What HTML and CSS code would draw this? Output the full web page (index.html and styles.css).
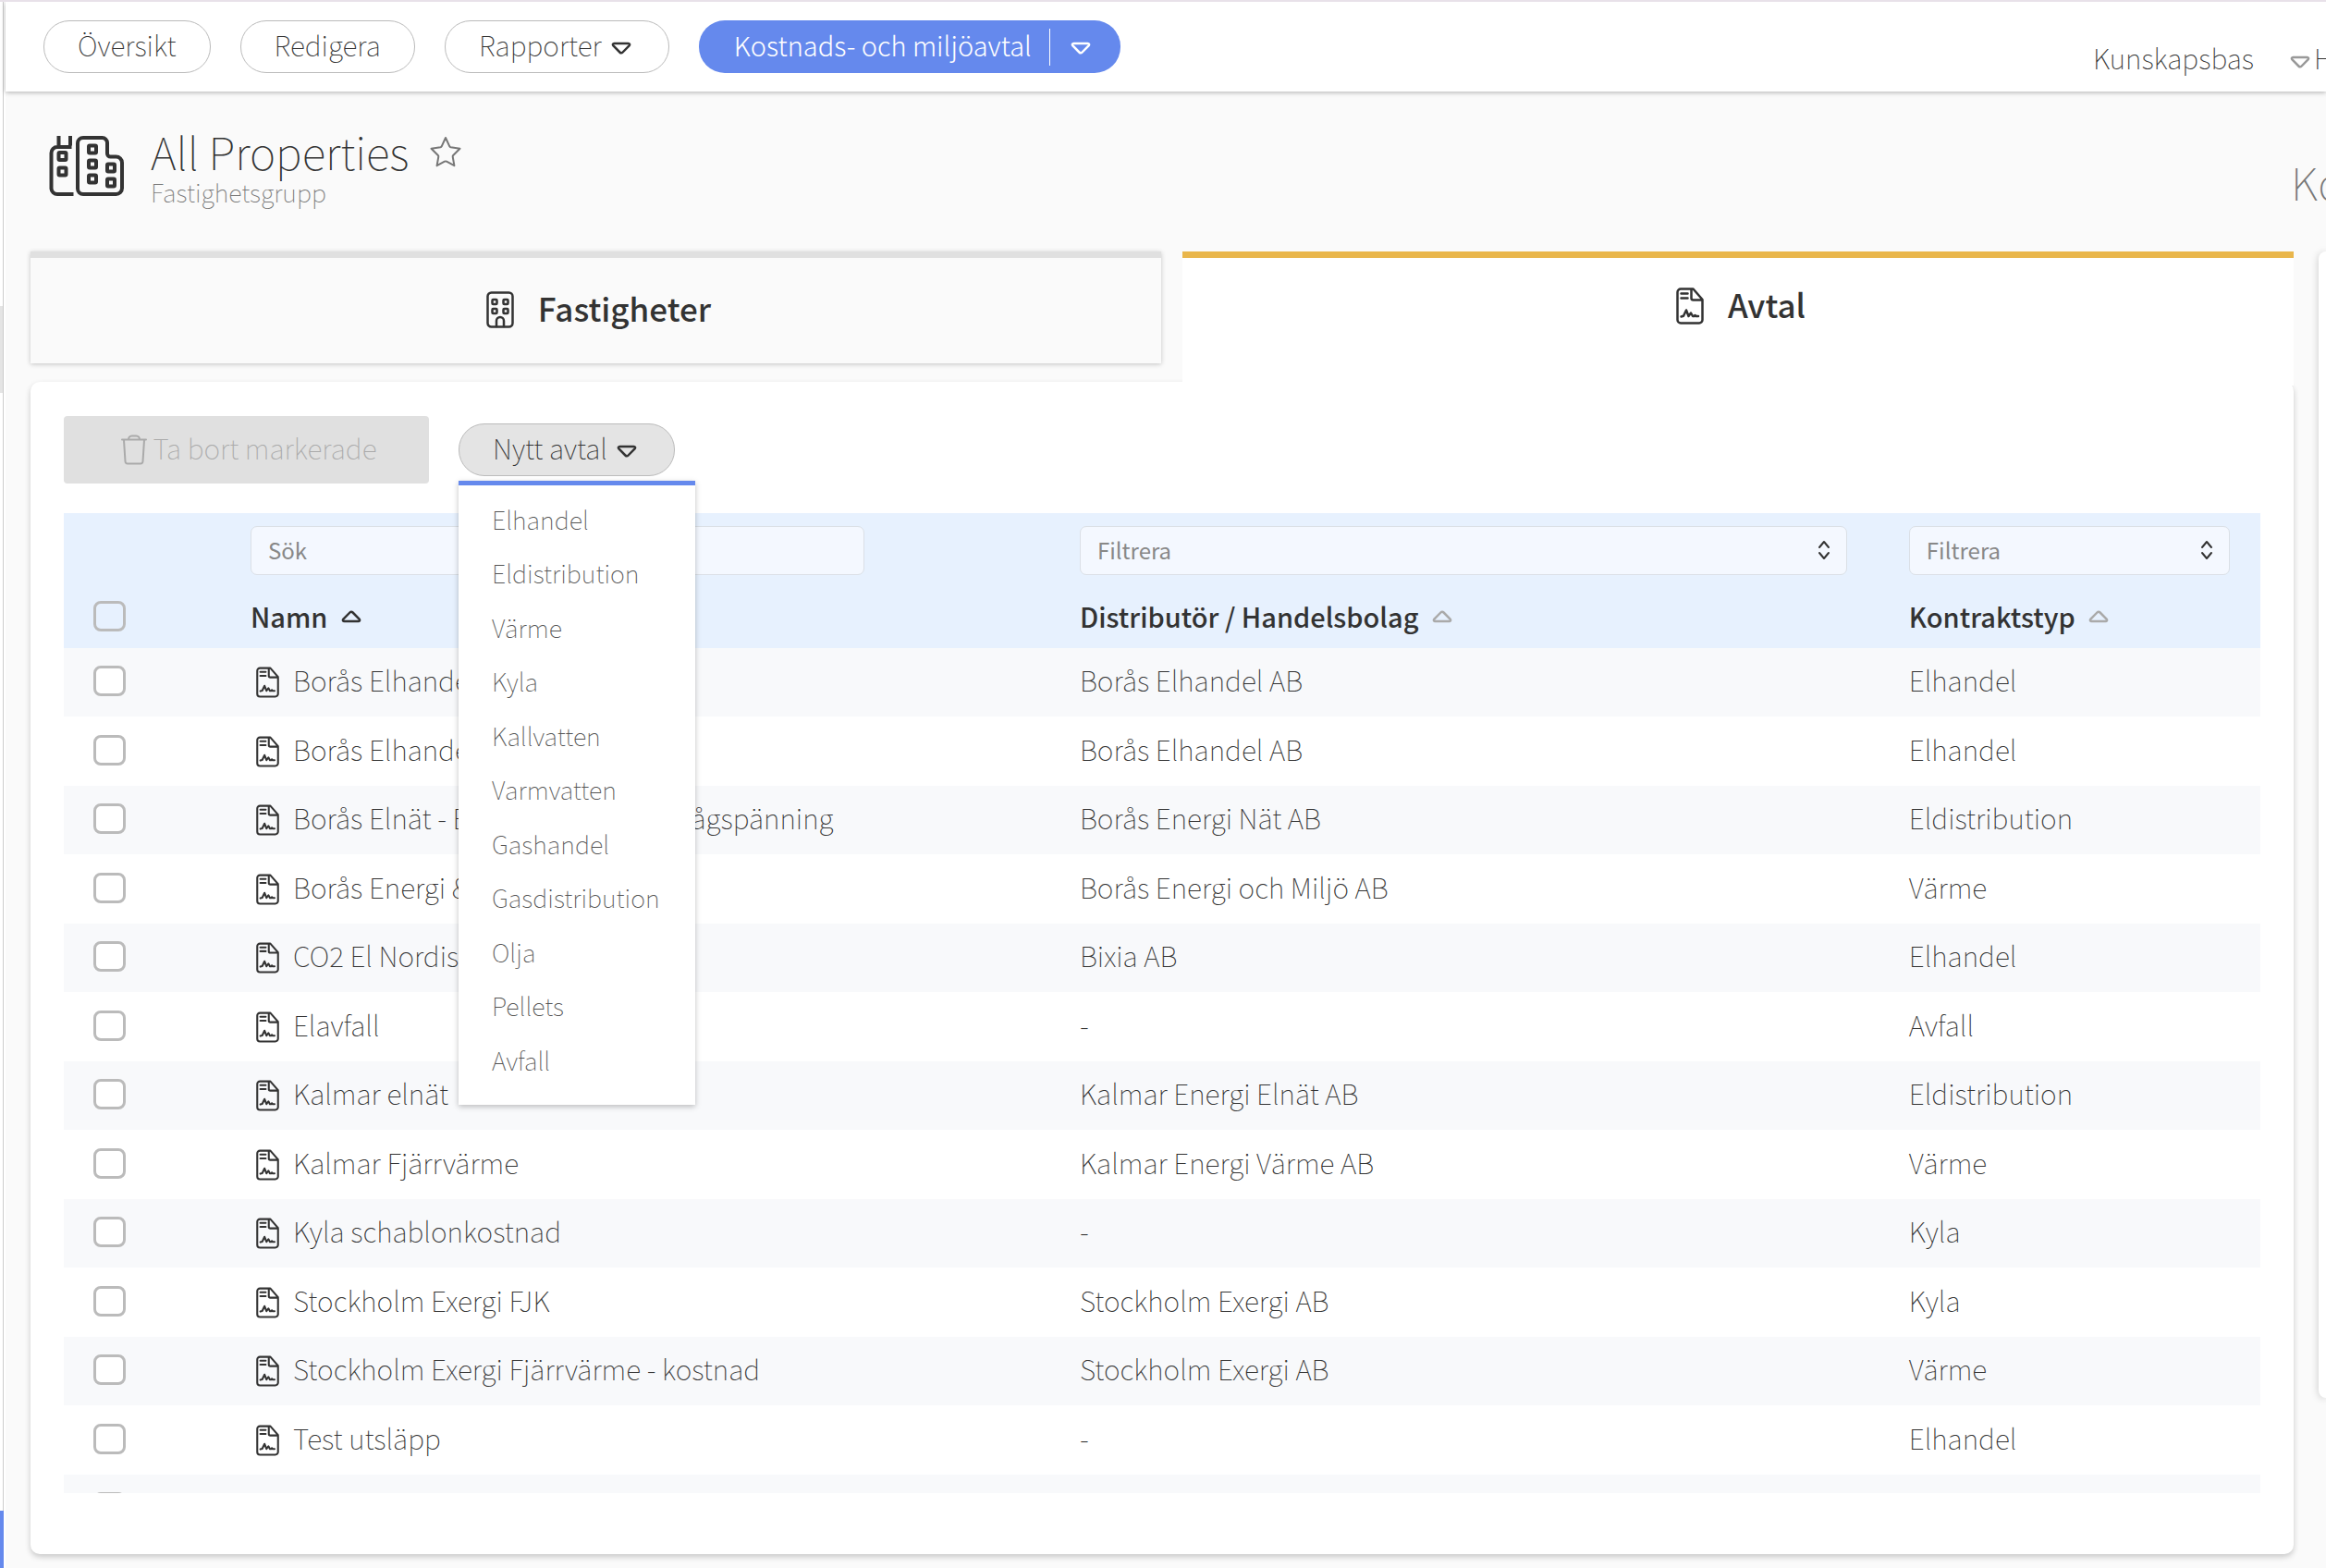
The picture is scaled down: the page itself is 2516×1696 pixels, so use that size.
FILE: index.html
```html
<!DOCTYPE html>
<html lang="sv">
<head>
  <meta charset="utf-8">
  <title>All Properties - Avtal</title>
  <meta name="viewport" content="width=device-width, initial-scale=1">
  <link rel="stylesheet" href="styles.css">
</head>
<body>
  <!-- icons -->
  <svg class="sprite" aria-hidden="true">
    <symbol id="caret" viewBox="0 0 22 14">
      <path d="M3.500 2h15c1.600 0 2 1.300 1.100 2.300l-7 7.200c-.9.9-2.300.9-3.200 0l-7-7.200C1.500 3.300 1.900 2 3.500 2z"/>
    </symbol>
    <symbol id="contract" viewBox="0 0 30 40">
      <path d="M5 1.500h13.500L28.500 13v22a3.500 3.500 0 0 1-3.500 3.500H5A3.500 3.500 0 0 1 1.500 35V5A3.500 3.500 0 0 1 5 1.500zM16.500 2v9.500a2 2 0 0 0 2 2h10M5.500 6.500h7M5.500 11.500h7M5.500 31.500l2.500-.7 3-6.300 2.500 6.500 2.500-3.500 2 3.500h1.500l1-1 1 1h2.500"/>
    </symbol>
    <symbol id="updown" viewBox="0 0 14 22">
      <path d="M2 8l5-6 5 6M2 14l5 6 5-6"/>
    </symbol>
  </svg>

  <div class="app">
    <aside class="sidebar">
      <div class="sidebar-thumb"></div>
      <div class="sidebar-active"></div>
    </aside>

    <div class="main">
      <header class="topbar">
        <nav class="nav">
          <button type="button" class="pill">Översikt</button>
          <button type="button" class="pill">Redigera</button>
          <button type="button" class="pill">Rapporter <svg class="caret"><use href="#caret"/></svg></button>
          <div class="split">
            <button type="button" class="split-main">Kostnads- och miljöavtal</button>
            <button type="button" class="split-toggle" aria-label="Visa fler"><svg class="caret"><use href="#caret"/></svg></button>
          </div>
        </nav>
        <div class="links">
          <a href="#">Kunskapsbas</a>
          <a href="#" class="help"><svg class="caret caret-muted"><use href="#caret"/></svg>H</a>
        </div>
      </header>

      <section class="heading">
        <svg class="heading-icon" viewBox="0 0 82 66">
          <path d="M10.500 0v10.500M23 0v10.500M24.500 12H9a6.500 6.500 0 0 0-6.500 6.500V57A6.500 6.500 0 0 0 9 63h17.500"/>
          <path d="M37 2h20.500a5.500 5.500 0 0 1 5.500 5.500V19a3.500 3.500 0 0 0 3.500 3.500h6a6.500 6.500 0 0 1 6.500 6.500v27.500a6.500 6.500 0 0 1-6.500 6.500H37a6 6 0 0 1-6-6V8a6 6 0 0 1 6-6z"/>
          <rect x="10.500" y="18" width="8" height="8" rx="1"/>
          <rect x="10.500" y="34.500" width="8" height="8" rx="1"/>
          <rect x="43" y="10.500" width="8" height="8" rx="1"/>
          <rect x="43" y="26.500" width="8" height="8" rx="1"/>
          <rect x="43" y="42.500" width="8" height="8" rx="1"/>
          <rect x="63" y="30.500" width="8" height="8" rx="1"/>
          <rect x="63" y="46.500" width="8" height="8" rx="1"/>
        </svg>
        <div class="heading-text">
          <h1>All Properties</h1>
          <p>Fastighetsgrupp</p>
        </div>
        <button type="button" class="star" aria-label="Favorit">
          <svg viewBox="0 0 34 34"><path d="M17 2l4.300 9.300c.3.600.7.900 1.300 1l9.900 1.400-7.300 7.300c-.4.400-.6.900-.5 1.500l1.700 9.700-8.300-4.500a2.500 2.500 0 0 0-2.200 0l-8.300 4.500 1.700-9.700c.1-.6-.1-1.100-.5-1.500L1.500 13.700l9.900-1.400c.6-.1 1-.4 1.300-1z"/></svg>
        </button>
        <h2 class="side-title">Ko</h2>
      </section>

      <div class="columns">
        <div class="content">
          <div class="tabs">
            <button type="button" class="tab">
              <svg class="tab-icon" viewBox="0 0 30 40">
                <rect x="1.500" y="1.500" width="27" height="37" rx="4"/>
                <rect x="6.500" y="9" width="5" height="5" rx="1"/>
                <rect x="18.500" y="9" width="5" height="5" rx="1"/>
                <rect x="6.500" y="19" width="5" height="5" rx="1"/>
                <rect x="18.500" y="19" width="5" height="5" rx="1"/>
                <path d="M11 38v-6a4 4 0 0 1 8 0v6"/>
              </svg>
              Fastigheter
            </button>
            <button type="button" class="tab tab-active">
              <svg class="tab-icon"><use href="#contract"/></svg>
              Avtal
            </button>
          </div>

          <div class="card">
            <div class="toolbar">
              <button type="button" class="delete" disabled>
                <svg class="trash" viewBox="0 0 28 33"><path d="M1 5.500h26M8 5.500c0-2 1.500-4 3.500-4h5c2 0 3.500 2 3.500 4M3 6l1.500 23c.1 1.600 1 2.500 2.500 2.500h14c1.500 0 2.400-.9 2.500-2.500L25 6"/></svg>
                Ta bort markerade
              </button>
              <div class="dropdown">
                <button type="button" class="pill pill-open">Nytt avtal <svg class="caret"><use href="#caret"/></svg></button>
                <ul class="menu">
                  <li><a href="#">Elhandel</a></li>
                  <li><a href="#">Eldistribution</a></li>
                  <li><a href="#">Värme</a></li>
                  <li><a href="#">Kyla</a></li>
                  <li><a href="#">Kallvatten</a></li>
                  <li><a href="#">Varmvatten</a></li>
                  <li><a href="#">Gashandel</a></li>
                  <li><a href="#">Gasdistribution</a></li>
                  <li><a href="#">Olja</a></li>
                  <li><a href="#">Pellets</a></li>
                  <li><a href="#">Avfall</a></li>
                </ul>
              </div>
            </div>

            <div class="table-wrap">
              <table>
                <colgroup>
                  <col class="col-check">
                  <col class="col-name">
                  <col class="col-company">
                  <col class="col-type">
                </colgroup>
                <thead>
                  <tr class="filters">
                    <td></td>
                    <td><input type="text" class="search" placeholder="Sök" aria-label="Sök namn"></td>
                    <td>
                      <div class="select">
                        <select aria-label="Filtrera distributör"><option>Filtrera</option></select>
                        <svg><use href="#updown"/></svg>
                      </div>
                    </td>
                    <td>
                      <div class="select select-type">
                        <select aria-label="Filtrera kontraktstyp"><option>Filtrera</option></select>
                        <svg><use href="#updown"/></svg>
                      </div>
                    </td>
                  </tr>
                  <tr class="titles">
                    <th><input type="checkbox" aria-label="Markera alla"></th>
                    <th>Namn <svg class="sort sort-on"><use href="#caret"/></svg></th>
                    <th>Distributör / Handelsbolag <svg class="sort"><use href="#caret"/></svg></th>
                    <th>Kontraktstyp <svg class="sort"><use href="#caret"/></svg></th>
                  </tr>
                </thead>
                <tbody>
                  <tr>
                    <td><input type="checkbox" aria-label="Markera rad"></td>
                    <td><svg class="doc"><use href="#contract"/></svg>Borås Elhandel</td>
                    <td>Borås Elhandel AB</td>
                    <td>Elhandel</td>
                  </tr>
                  <tr>
                    <td><input type="checkbox" aria-label="Markera rad"></td>
                    <td><svg class="doc"><use href="#contract"/></svg>Borås Elhandel</td>
                    <td>Borås Elhandel AB</td>
                    <td>Elhandel</td>
                  </tr>
                  <tr>
                    <td><input type="checkbox" aria-label="Markera rad"></td>
                    <td><svg class="doc"><use href="#contract"/></svg>Borås Elnät - Eldistribution tariff lågspänning</td>
                    <td>Borås Energi Nät AB</td>
                    <td>Eldistribution</td>
                  </tr>
                  <tr>
                    <td><input type="checkbox" aria-label="Markera rad"></td>
                    <td><svg class="doc"><use href="#contract"/></svg>Borås Energi &amp; Miljö</td>
                    <td>Borås Energi och Miljö AB</td>
                    <td>Värme</td>
                  </tr>
                  <tr>
                    <td><input type="checkbox" aria-label="Markera rad"></td>
                    <td><svg class="doc"><use href="#contract"/></svg>CO2 El Nordisk</td>
                    <td>Bixia AB</td>
                    <td>Elhandel</td>
                  </tr>
                  <tr>
                    <td><input type="checkbox" aria-label="Markera rad"></td>
                    <td><svg class="doc"><use href="#contract"/></svg>Elavfall</td>
                    <td>-</td>
                    <td>Avfall</td>
                  </tr>
                  <tr>
                    <td><input type="checkbox" aria-label="Markera rad"></td>
                    <td><svg class="doc"><use href="#contract"/></svg>Kalmar elnät</td>
                    <td>Kalmar Energi Elnät AB</td>
                    <td>Eldistribution</td>
                  </tr>
                  <tr>
                    <td><input type="checkbox" aria-label="Markera rad"></td>
                    <td><svg class="doc"><use href="#contract"/></svg>Kalmar Fjärrvärme</td>
                    <td>Kalmar Energi Värme AB</td>
                    <td>Värme</td>
                  </tr>
                  <tr>
                    <td><input type="checkbox" aria-label="Markera rad"></td>
                    <td><svg class="doc"><use href="#contract"/></svg>Kyla schablonkostnad</td>
                    <td>-</td>
                    <td>Kyla</td>
                  </tr>
                  <tr>
                    <td><input type="checkbox" aria-label="Markera rad"></td>
                    <td><svg class="doc"><use href="#contract"/></svg>Stockholm Exergi FJK</td>
                    <td>Stockholm Exergi AB</td>
                    <td>Kyla</td>
                  </tr>
                  <tr>
                    <td><input type="checkbox" aria-label="Markera rad"></td>
                    <td><svg class="doc"><use href="#contract"/></svg>Stockholm Exergi Fjärrvärme - kostnad</td>
                    <td>Stockholm Exergi AB</td>
                    <td>Värme</td>
                  </tr>
                  <tr>
                    <td><input type="checkbox" aria-label="Markera rad"></td>
                    <td><svg class="doc"><use href="#contract"/></svg>Test utsläpp</td>
                    <td>-</td>
                    <td>Elhandel</td>
                  </tr>
                  <tr>
                    <td><input type="checkbox" aria-label="Markera rad"></td>
                    <td></td>
                    <td></td>
                    <td></td>
                  </tr>
                </tbody>
              </table>
            </div>
          </div>
        </div>

        <aside class="panel"></aside>
      </div>
    </div>
  </div>
</body>
</html>
```
FILE: styles.css
```css
* {
  box-sizing: border-box;
}

body {
  margin: 0;
  height: 100vh;
  overflow: hidden;
  border-top: 2px solid #e8e1e9;
  background: #fafafa;
  color: #333;
  font-family: "Noto Sans CJK SC", "Open Sans", sans-serif;
  font-size: 30px;
  font-weight: 100;
  line-height: 40px;
}

button, input, select {
  font: inherit;
  color: inherit;
}

button {
  cursor: pointer;
}

a {
  color: inherit;
  text-decoration: none;
}

h1, h2, p, ul {
  margin: 0;
  padding: 0;
  font-weight: inherit;
}

svg {
  fill: none;
  stroke: currentColor;
  stroke-width: 2.5px;
  stroke-linecap: round;
  stroke-linejoin: round;
  flex-shrink: 0;
}

.sprite {
  position: absolute;
  width: 0;
  height: 0;
}

.app {
  display: flex;
  height: 100%;
}

/* left edge */
.sidebar {
  display: flex;
  flex-direction: column;
  width: 4px;
  border-right: 1px solid #ccc;
  background: #fff;
}

.sidebar-thumb {
  height: 94px;
  margin-top: 329px;
  background: #e4e4e4;
}

.sidebar-active {
  width: 4px;
  height: 62px;
  margin-top: auto;
  background: #6589ed;
}

.main {
  display: flex;
  flex-direction: column;
  flex: 1;
  min-width: 0;
  border-left: 2px solid #fff;
}

/* top bar */
.topbar {
  display: flex;
  justify-content: space-between;
  height: 97px;
  padding: 20px 0 0 41px;
  background: #fff;
  box-shadow: 0 1px 5px rgba(0, 0, 0, 0.3);
}

.nav {
  display: flex;
  align-items: flex-start;
  gap: 32px;
}

.pill {
  display: flex;
  align-items: center;
  gap: 10px;
  height: 57px;
  padding: 0 36px 5px;
  border: 1px solid #bbb;
  border-radius: 28px;
  background: #fff;
}

.pill-open {
  background: #e4e4e4;
}

.caret {
  width: 22px;
  height: 14px;
  margin: 8px 4px 0 0;
}

.split {
  display: flex;
  align-items: center;
  height: 57px;
  border-radius: 28px;
  background: #6589ed;
  color: #fff;
  font-size: 29px;
  font-weight: 300;
}

.split button {
  display: flex;
  align-items: center;
  border: 0;
  background: none;
}

.split .split-main {
  padding: 0 19px 5px 38px;
}

.split .split-toggle {
  height: 40px;
  padding: 0 32px 0 22px;
  border-left: 1px solid #fff;
}

.split .caret {
  margin: 2px 0 0;
}

.links {
  display: flex;
  align-items: flex-start;
  gap: 39px;
  width: 252px;
  padding-top: 20px;
  overflow: hidden;
}

.help {
  display: flex;
  gap: 4px;
}

.help .caret-muted {
  margin: 18px 0 0;
  color: #999;
}

/* page heading */
.heading {
  display: flex;
  align-items: flex-start;
  height: 173px;
  padding: 42px 0 0 47px;
  overflow: hidden;
}

.heading-icon {
  width: 82px;
  height: 66px;
  margin-top: 6px;
  stroke-width: 4px;
  stroke-linecap: butt;
}

.heading-text {
  margin-left: 28px;
}

.heading h1, .side-title {
  font-size: 48px;
  line-height: 44px;
}

.heading p {
  color: #777;
  font-size: 27px;
  line-height: 46px;
}

.star {
  margin-left: 23px;
  padding: 6px 0 0;
  border: 0;
  background: none;
  color: #777;
}

.star svg {
  display: block;
  width: 34px;
  height: 34px;
  stroke-width: 2px;
}

.side-title {
  width: 38px;
  margin: 33px 0 0 auto;
  color: #777;
}

/* tabs */
.columns {
  display: flex;
  flex: 1;
  gap: 27px;
  min-height: 0;
  padding-left: 27px;
}

.content {
  display: flex;
  flex-direction: column;
  flex: 1;
  padding-bottom: 15px;
}

.tabs {
  display: grid;
  grid-template-columns: 1223fr 1202fr;
  gap: 23px;
  height: 141px;
}

.tab {
  display: flex;
  justify-content: center;
  align-items: flex-start;
  gap: 26px;
  height: 121px;
  padding: 34px 0 0 6px;
  border: 0;
  border-top: 7px solid #e0e0e0;
  background: #fafafa;
  box-shadow: 0 1px 5px rgba(0, 0, 0, 0.22);
  font-size: 35px;
  font-weight: 500;
}

.tab-active {
  position: relative;
  z-index: 1;
  height: 145px;
  padding-top: 30px;
  border-top-color: #e9b64b;
  background: #fff;
  box-shadow: none;
}

.tab-icon {
  width: 30px;
  height: 40px;
  margin-top: 2px;
}

/* card */
.card {
  display: flex;
  flex-direction: column;
  flex: 1;
  min-height: 0;
  padding: 37px 36px 66px;
  border-radius: 10px;
  background: #fff;
  box-shadow: 0 3px 6px rgba(0, 0, 0, 0.2);
}

.toolbar {
  display: flex;
  gap: 32px;
  margin-bottom: 32px;
}

.delete {
  display: flex;
  justify-content: center;
  align-items: center;
  gap: 6px;
  width: 395px;
  height: 73px;
  padding: 0 0 5px 6px;
  border: 0;
  border-radius: 4px;
  background: #e0e0e0;
  color: #aaa;
  cursor: default;
}

.trash {
  width: 28px;
  height: 33px;
  margin-top: 4px;
  stroke-width: 2px;
}

.dropdown {
  position: relative;
  padding-top: 8px;
}

.menu {
  position: absolute;
  top: 70px;
  left: 0;
  z-index: 2;
  display: flex;
  flex-direction: column;
  width: 256px;
  height: 675px;
  padding: 9px 0 18px;
  border-top: 5px solid #6589ed;
  background: #fff;
  box-shadow: 0 2px 6px rgba(0, 0, 0, 0.25);
  color: #555;
  font-size: 27px;
  list-style: none;
}

.menu li {
  flex: 1;
}

.menu a {
  display: block;
  padding: 8px 36px;
}

/* table */
.table-wrap {
  flex: 1;
  min-height: 0;
  overflow: hidden;
}

table {
  width: 100%;
  border-collapse: collapse;
  table-layout: fixed;
}

.col-check {
  width: 8.5%;
}

.col-name, .col-company {
  width: 37.75%;
}

td, th {
  padding: 0;
  text-align: left;
  white-space: nowrap;
}

thead {
  background: #e7f1fe;
}

.filters td {
  height: 82px;
  padding-top: 14px;
  vertical-align: top;
}

.titles th {
  height: 64px;
  padding-bottom: 6px;
  font-size: 29px;
  font-weight: 500;
}

tbody tr {
  height: 75px;
}

tbody tr:nth-child(odd) {
  height: 74px;
  background: #f8f9fb;
}

tbody td {
  padding-bottom: 6px;
}

tbody td:first-child {
  padding-bottom: 3px;
}

input[type="checkbox"] {
  display: block;
  appearance: none;
  width: 35px;
  height: 33px;
  margin: 0 0 0 32px;
  border: 3px solid #bbb;
  border-radius: 8px;
  background: #fff;
}

.titles input[type="checkbox"] {
  background: none;
}

.search, .select select {
  display: block;
  width: 100%;
  height: 53px;
  padding: 0 18px 2px;
  border: 1px solid #dbe0e6;
  border-radius: 7px;
  background: #f4f8ff;
  color: #888;
  font-size: 24px;
  font-weight: 400;
  appearance: none;
}

.search {
  width: 74%;
}

.search::placeholder {
  color: #888;
}

.select {
  position: relative;
  margin-right: 67px;
}

.select-type {
  margin-right: 33px;
}

.select svg {
  position: absolute;
  top: 15px;
  right: 18px;
  width: 14px;
  height: 22px;
  stroke-width: 2px;
}

.sort {
  width: 22px;
  height: 14px;
  margin-left: 8px;
  color: #aaa;
  transform: rotate(180deg);
  vertical-align: 5px;
}

.sort-on {
  color: #333;
}

.doc {
  width: 25px;
  height: 34px;
  margin: 0 15px 0 6px;
  vertical-align: -7px;
}

/* right panel, continues outside the window */
.panel {
  width: 8px;
  height: 1240px;
  border-radius: 10px 0 0 10px;
  background: #fff;
  box-shadow: 0 1px 8px rgba(0, 0, 0, 0.2);
}
```
